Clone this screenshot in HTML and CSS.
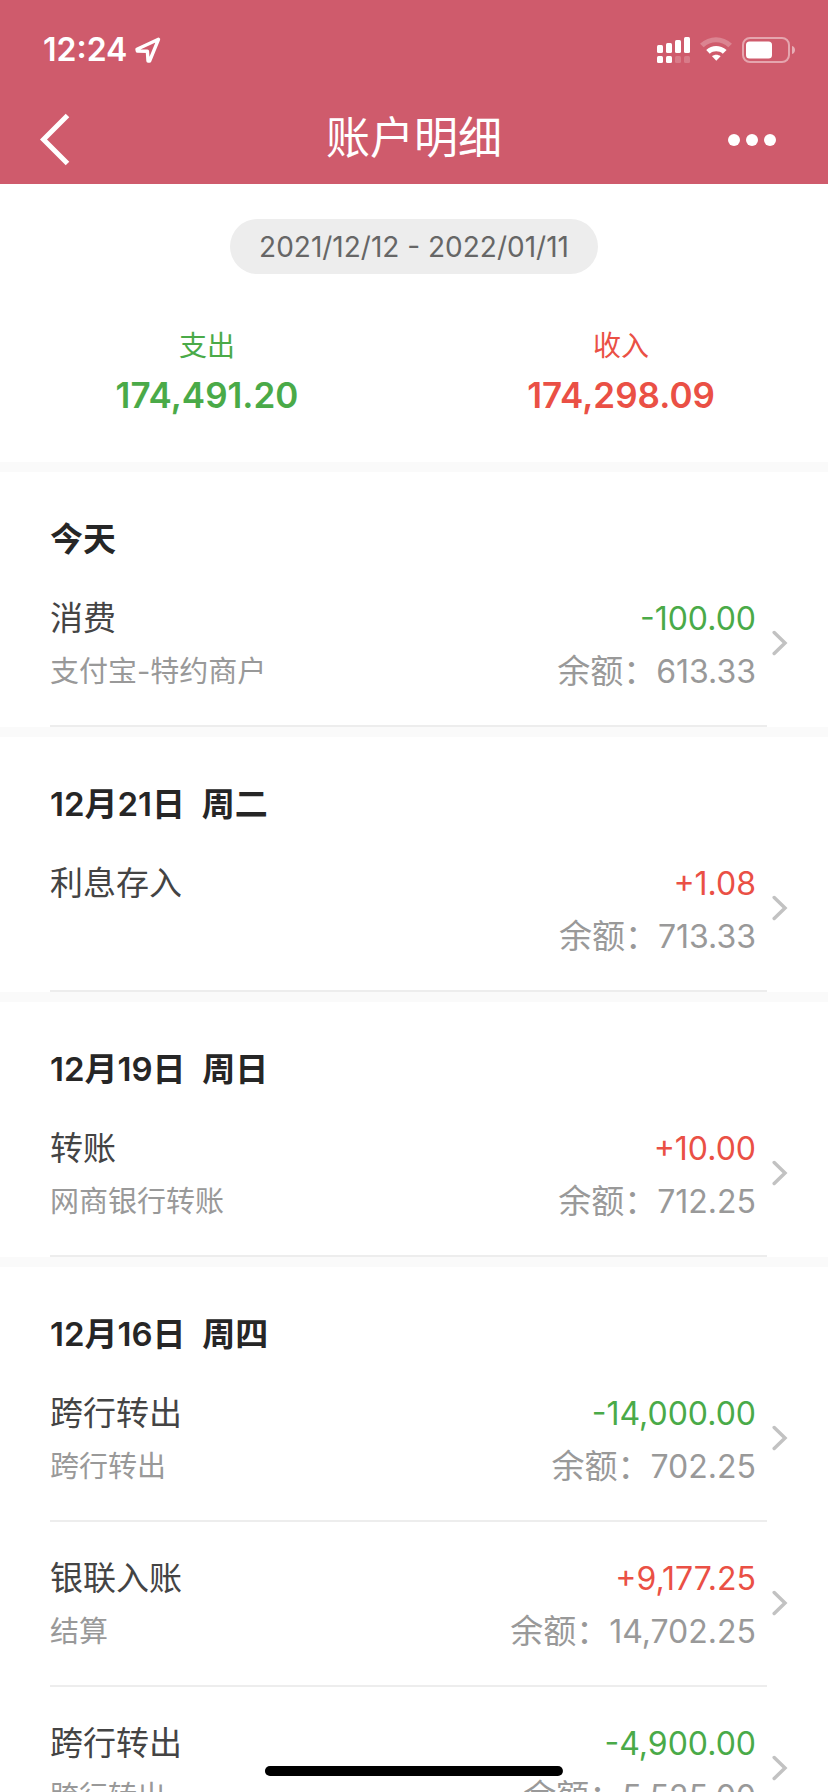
FILE: index.html
```html
<!DOCTYPE html>
<html lang="zh-CN">
<head>
<meta charset="utf-8">
<meta name="viewport" content="width=device-width, initial-scale=1">
<title>账户明细</title>
<link rel="stylesheet" href="styles.css">
</head>
<body>
<svg class="defs" aria-hidden="true">
  <symbol id="chevron" viewBox="0 0 16 26"><path d="M2.200 2.500 13 13 2.200 23.500" fill="none" stroke="currentColor" stroke-width="3.500" stroke-linecap="round" stroke-linejoin="miter"/></symbol>
</svg>
<div class="app">
  <header class="header">
    <div class="status">
      <div class="status-side">
        <span class="time">12:24</span>
        <svg class="location" viewBox="0 0 26 26" aria-hidden="true"><path d="M23.500 2.300 2 12.300 2.400 14 12.400 14.200 13 24 14.600 24 Z" fill="none" stroke="#fff" stroke-width="3.400" stroke-linejoin="round"/></svg>
      </div>
      <div class="status-side status-icons">
        <svg class="signal" viewBox="0 0 33 26" aria-hidden="true" fill="#fff">
          <rect x="0" y="8" width="6" height="8" rx="1.500"/><rect x="9" y="6" width="6" height="10" rx="1.500"/><rect x="18" y="3" width="6" height="13" rx="1.500"/><rect x="27" y="0" width="6" height="16" rx="1.500"/>
          <rect x="0" y="19" width="6" height="7" rx="1.500"/><rect x="9" y="19" width="6" height="7" rx="1.500"/>
          <rect x="18" y="19" width="6" height="7" rx="1.500" opacity=".2"/><rect x="27" y="19" width="6" height="7" rx="1.500" opacity=".2"/>
        </svg>
        <svg class="wifi" viewBox="0 0 32 26" aria-hidden="true" fill="#fff">
          <path opacity=".25" d="M0 6.800C9-2.100 23-2.100 32 6.800L28.300 10.300C21.200 3.700 10.800 3.700 3.700 10.300Z"/>
          <path d="M6.200 13C11.800 7.700 20.200 7.700 26.600 13L22.800 16.700C19 13.500 13.400 13.500 9.800 16.700Z"/>
          <path d="M12 19.200C14.300 17.200 18.200 17.200 20.600 19.200L16.300 23.800Z"/>
        </svg>
        <svg class="battery" viewBox="0 0 54 26" aria-hidden="true">
          <rect x="1" y="1" width="46" height="24" rx="7" fill="none" stroke="#fff" stroke-width="2" opacity=".45"/>
          <rect x="4" y="4.500" width="26" height="17" rx="3.500" fill="#fff"/>
          <path d="M50 9C54 10 54 16 50 17Z" fill="#fff" opacity=".5"/>
        </svg>
      </div>
    </div>
    <nav class="nav">
      <button class="nav-button" type="button" aria-label="返回">
        <svg class="back" viewBox="0 0 30 54" aria-hidden="true"><path d="M27.500 2.500 3.500 26.500 27.500 50.500" fill="none" stroke="#fff" stroke-width="5"/></svg>
      </button>
      <h1 class="title">账户明细</h1>
      <button class="nav-button nav-more" type="button" aria-label="更多">
        <svg class="dots" viewBox="0 0 48 12" aria-hidden="true" fill="#fff"><circle cx="6" cy="6" r="6"/><circle cx="24" cy="6" r="6"/><circle cx="42" cy="6" r="6"/></svg>
      </button>
    </nav>
  </header>
  <main class="content">
    <section class="summary">
      <button class="range" type="button">2021/12/12 - 2022/01/11</button>
      <dl class="totals">
        <div class="total out"><dt>支出</dt><dd>174,491.20</dd></div>
        <div class="total in"><dt>收入</dt><dd>174,298.09</dd></div>
      </dl>
    </section>
    <section class="day">
      <h2 class="date">今天</h2>
      <a class="entry" href="#"><span class="details"><span class="line"><span class="name">消费</span><span class="amount out">-100.00</span></span><span class="line"><span class="note">支付宝-特约商户</span><span class="balance">余额：<span class="amount">613.33</span></span></span></span><svg class="chevron" aria-hidden="true"><use href="#chevron"/></svg></a>
    </section>
    <section class="day">
      <h2 class="date">12月21日&nbsp; 周二</h2>
      <a class="entry" href="#"><span class="details"><span class="line"><span class="name">利息存入</span><span class="amount in">+1.08</span></span><span class="line"><span class="note"></span><span class="balance">余额：<span class="amount">713.33</span></span></span></span><svg class="chevron" aria-hidden="true"><use href="#chevron"/></svg></a>
    </section>
    <section class="day">
      <h2 class="date">12月19日&nbsp; 周日</h2>
      <a class="entry" href="#"><span class="details"><span class="line"><span class="name">转账</span><span class="amount in">+10.00</span></span><span class="line"><span class="note">网商银行转账</span><span class="balance">余额：<span class="amount">712.25</span></span></span></span><svg class="chevron" aria-hidden="true"><use href="#chevron"/></svg></a>
    </section>
    <section class="day">
      <h2 class="date">12月16日&nbsp; 周四</h2>
      <a class="entry" href="#"><span class="details"><span class="line"><span class="name">跨行转出</span><span class="amount out">-14,000.00</span></span><span class="line"><span class="note">跨行转出</span><span class="balance">余额：<span class="amount">702.25</span></span></span></span><svg class="chevron" aria-hidden="true"><use href="#chevron"/></svg></a>
      <a class="entry" href="#"><span class="details"><span class="line"><span class="name">银联入账</span><span class="amount in">+9,177.25</span></span><span class="line"><span class="note">结算</span><span class="balance">余额：<span class="amount">14,702.25</span></span></span></span><svg class="chevron" aria-hidden="true"><use href="#chevron"/></svg></a>
      <a class="entry" href="#"><span class="details"><span class="line"><span class="name">跨行转出</span><span class="amount out">-4,900.00</span></span><span class="line"><span class="note">跨行转出</span><span class="balance">余额：<span class="amount">5,525.00</span></span></span></span><svg class="chevron" aria-hidden="true"><use href="#chevron"/></svg></a>
    </section>
  </main>
  <div class="home-indicator"></div>
</div>
</body>
</html>
```

FILE: styles.css
```css
* { box-sizing: border-box; }

body {
  margin: 0;
  background: #fff;
  color: #444;
  font-family: Inter, "Noto Sans CJK SC", sans-serif;
  font-size: 33px;
}

button {
  border: 0;
  padding: 0;
  background: none;
  color: inherit;
  font: inherit;
}

h1, h2, dl, dd { margin: 0; }

.defs { display: none; }

.app {
  display: flex;
  flex-direction: column;
  height: 100vh;
  overflow: hidden;
}

/* Header */
.header {
  flex: none;
  background: #cf5b6c;
  color: #fff;
}

.status {
  display: flex;
  align-items: center;
  justify-content: space-between;
  height: 94px;
  padding: 6px 32px 0 43px;
}

.status-side {
  display: flex;
  align-items: center;
  gap: 8px;
}

.status-icons { gap: 10px; }

.time {
  font-size: 32px;
  font-weight: 600;
  line-height: 40px;
}

.location { width: 26px; height: 26px; }
.signal { width: 33px; height: 26px; }
.wifi { width: 32px; height: 26px; }
.battery { width: 54px; height: 26px; }

.nav {
  display: grid;
  grid-template-columns: 1fr auto 1fr;
  align-items: center;
  height: 90px;
  padding: 2px 52px 0 40px;
}

.nav-button {
  display: flex;
  align-items: center;
  height: 88px;
}

.nav-more { justify-content: flex-end; }

.back { width: 30px; height: 54px; }
.dots { width: 48px; height: 12px; }

.title {
  padding-left: 12px;
  font-size: 44px;
  font-weight: 400;
  line-height: 84px;
  height: 88px;
}

/* Summary */
.content {
  flex: 1;
  min-height: 0;
  overflow-y: auto;
  scrollbar-width: none;
}

.summary {
  display: flex;
  flex-direction: column;
  align-items: center;
  gap: 48px;
  padding: 35px 0 41px;
}

.range {
  height: 55px;
  padding: 0 29px;
  border-radius: 28px;
  background: #ededed;
  color: #666;
  font-size: 28px;
}

.totals {
  display: grid;
  grid-template-columns: 1fr 1fr;
  width: 100%;
}

.total { text-align: center; }

.total dt {
  font-size: 28px;
  line-height: 48px;
}

.total dd {
  font-size: 35px;
  font-weight: 600;
  line-height: 51px;
}

.out { color: #4aaa48; }
.in { color: #ea5045; }

/* Day groups */
.day { border-top: 10px solid #fafafa; }

.date {
  padding: 42px 50px 0;
  height: 90px;
  color: #262626;
  font-size: 33px;
  font-weight: 600;
  line-height: 50px;
}

.entry {
  display: flex;
  align-items: center;
  gap: 5px;
  padding: 0 40px 0 50px;
  color: inherit;
  text-decoration: none;
}

.details {
  flex: 1;
  height: 165px;
  padding: 30px 11px 0 0;
  border-bottom: 2px solid #ededed;
}

.line {
  display: flex;
  justify-content: space-between;
  line-height: 53px;
}

.note {
  color: #999;
  font-size: 29px;
}

.amount { font-size: 32px; }

.balance { color: #999; }

.chevron {
  flex: none;
  width: 16px;
  height: 26px;
  margin-bottom: 4px;
  color: #c2c2c2;
}

.home-indicator {
  position: fixed;
  bottom: 16px;
  left: 50%;
  width: 36%;
  height: 10px;
  border-radius: 5px;
  background: #000;
  transform: translateX(-50%);
}
```
